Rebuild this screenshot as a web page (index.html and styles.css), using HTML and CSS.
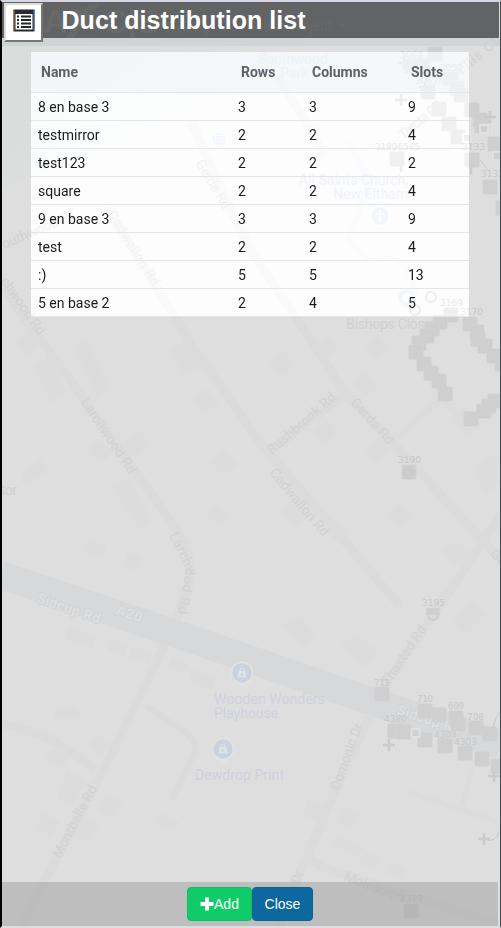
FILE: index.html
```
<!DOCTYPE html>
<html lang="en">
<head>
<meta charset="utf-8">
<title>Duct distribution list</title>
<link rel="stylesheet" href="styles.css">
</head>
<body>
<svg class="map" viewBox="0 0 501 928" width="501" height="928" aria-hidden="true">
  <defs>
    <linearGradient id="park" gradientUnits="userSpaceOnUse" x1="0" y1="40" x2="110" y2="200"><stop offset="0" stop-color="#d8dddc"/><stop offset="1" stop-color="#dedede"/></linearGradient>
    <rect id="n" x="-7.3" y="-7.3" width="14.6" height="14.6" rx="1.5"/>
    <path id="plus" d="M-6 0H6M0-6V6"/>
    <g id="shop"><path d="M-8 8L0 15 8 8z" class="halo"/><circle r="11.500" class="halo"/><circle r="9.700"/><path d="M-4.500 4.500h9l-1-6.500h-7z" class="bag"/><path d="M-2-2v-1a2 2 0 0 1 4 0v1" class="handle"/><circle r="1.200" cy="1.500"/></g>
  </defs>
  <path d="M0 38H310L230 92 2 190Z" fill="url(#park)"/>
  <g class="blocks">
    <path d="M15 342l14-12 12 14-14 12zM34 365l16-9 17 37-15 10zM74 348l13-8 23 48-13 9zM98 440l16 11-12 12-15-12zM138 430l13 15-15 13-14-13zM170 350l16-9 15 25-17 10zM192 398l15-9 12 16-17 9zM222 450l15 14-13 11-14-13zM21 475l20-16 7 12-22 14zM112 485l15-7 25 42-13 10zM216 506l13 9-10 10-14-9zM87 540l20 6-4 12-20-7zM128 552l14 6-4 13-14-4zM68 626l28 10-4 12-27-10zM110 638l18 6-4 13-16-6zM132 646l20 6-3 12-19-6zM172 658l16 6-6 10-14-6zM192 669l24 10-5 12-22-9z"/>
    <path d="M53 710l20-5 11 8-8 6-22-1zM50 748l18 6-4 14-20-8zM97 735l13 9-10 12-13-10zM67 770l20 10-14 27-16-8zM106 793l17 10-10 16-15-8zM84 817l16 7-10 18-16-8zM43 812l17 10-9 15-15-9zM160 812l20 10-7 9-17-9zM308 800l20 5-4 17-20-5zM344 805l18 9-11 16-15-9zM336 835l28 12-5 10-28-12zM363 852l18 6-6 12-16-6zM392 862l15 7-6 11-15-7z"/>
    <path d="M268 362l15-12 12 14-13 12zM310 348l19-13 9 14-17 12zM365 345l13-10 11 14-14 11zM352 383l14-12 13 15-14 10zM313 430l15-11 10 14-15 12zM365 450l16-13 9 13-14 12zM292 500l17 15-12 13-18-16zM336 520l14 12-10 12-15-12zM450 420l16-13 16 16-14 13zM474 469l17-15 9 10v19l-15 11zM442 550l16-8 12 13-15 10zM386 515l12-12 14 13-12 13zM340 645l18-10 20 18-17 14zM283 625l16-9 17 18-14 13zM452 623l20-21 13 13-20 20z"/>
  </g>
  <g class="roads">
    <path d="M0 278Q22 320 45 345L177 530Q194 552 188 590L162 651 110 757 20 928" />
    <path d="M105 205L192 345 258 440 400 606"/>
    <path d="M190 120L250 250 306 332 345 394 395 445 482 540 501 560"/>
    <path d="M270 451L345 394M501 515L460 575 382 690 334 793 308 855 275 928M308 859L330 870 501 925M-5 723Q50 730 95 770M260 52l40 60 25 45"/>
    <path class="lane" d="M145 705L189 735Q200 747 192 758L172 799"/>
  </g>
  <path class="stream" d="M345 140l25 40-22 60 22 22q40-15 45 35M397 437l44-38 21 20M408 792l92 30M462 805l10-35"/>
  <path class="a20" d="M0 575L170 632 380 704 501 745"/>
  <g class="road-labels">
    <text transform="translate(80 402) rotate(56)" textLength="88">Larchwood Rd</text>
    <text transform="translate(0 281) rotate(55)" textLength="67">chwood Rd</text>
    <text transform="translate(169 535) rotate(64)" textLength="47">Larchw</text>
    <text transform="translate(186 567) rotate(100)" textLength="47">ood Rd</text>
    <text transform="translate(107 214) rotate(58)" textLength="86">Cadwallon Rd</text>
    <text transform="translate(195 163) rotate(59)" textLength="55">Gerda Rd</text>
    <text transform="translate(350 403) rotate(48)" textLength="57">Gerda Rd</text>
    <text transform="translate(272 455) rotate(-41)" textLength="86">Rushbrook Rd</text>
    <text transform="translate(269 473) rotate(50)" textLength="84">Cadwallon Rd</text>
    <text transform="translate(388 687) rotate(-56)" textLength="70">Thaxted Rd</text>
    <text transform="translate(339 791) rotate(-70)" textLength="70">Domonic Dr</text>
    <text transform="translate(280 938) rotate(-70)" textLength="70">Domonic Dr</text>
    <text transform="translate(60 859) rotate(-62)" textLength="80">Montbelle Rd</text>
    <text transform="translate(343 880) rotate(21)" textLength="65">Molescroft</text>
    <text transform="translate(4 249) rotate(-23)" textLength="80">outhwood RT</text>
    <text transform="translate(403 140) rotate(-39)" textLength="52">Tarcta Rd</text>
    <text transform="translate(461 75) rotate(-39)" textLength="48">Ellis Cl</text>
    <text transform="translate(489 555) rotate(40)">Ge</text>
  </g>
  <g class="a20-labels">
    <text transform="translate(36 602) rotate(19)" textLength="66">Sidcup Rd</text>
    <text transform="translate(115 614) rotate(18)" textLength="27">A20</text>
    <text transform="translate(396 714) rotate(18)" textLength="66">Sidcup Rd</text>
  </g>
  <g class="places">
    <g class="green"><text x="258" y="64" textLength="70">Southwood</text><text x="280" y="78" textLength="28">Park</text></g>
    <text x="299" y="185" textLength="109">All Saints Church,</text><text x="333" y="199" textLength="75">New Eltham</text>
    <g class="grey"><text x="346" y="329" textLength="86">Bishops Close</text><text x="1" y="495" textLength="16">tor</text></g>
    <text x="214" y="704" textLength="111">Wooden Wonders</text><text x="214" y="718" textLength="64">Playhouse</text><text x="195" y="780" textLength="89">Dewdrop Print</text>
  </g>
  <g class="shops"><use href="#shop" x="242" y="673"/><use href="#shop" x="223" y="749"/></g>
  <g class="church"><circle cx="380" cy="216" r="10"/><path d="M380 210v12M376 214h8"/><circle cx="407" cy="298" r="7" class="ring"/></g>
  <g class="bus"><circle cx="219" cy="139" r="6.5"/><path d="M215.500 135.500h7v6h-7zM216 139h6"/></g>
  <g class="nodes">
    <use href="#n" x="435" y="54"/><use href="#n" x="412" y="66"/><use href="#n" x="422" y="66"/><use href="#n" x="428" y="92"/><use href="#n" x="451" y="79"/><use href="#n" x="457" y="88"/><use href="#n" x="461" y="95"/><use href="#n" x="439" y="109"/><use href="#n" x="449" y="124"/><use href="#n" x="458" y="137"/><use href="#n" x="472" y="110"/><use href="#n" x="480" y="120"/><use href="#n" x="482" y="126"/><use href="#n" x="495" y="144"/><use href="#n" x="397" y="159"/><use href="#n" x="472" y="160"/><use href="#n" x="490" y="187"/><use href="#n" x="503" y="208"/>
    <use href="#n" x="451" y="315"/><use href="#n" x="440" y="322"/><use href="#n" x="432" y="329"/><use href="#n" x="427" y="336"/><use href="#n" x="419" y="343"/><use href="#n" x="416" y="352"/><use href="#n" x="424" y="364"/><use href="#n" x="431" y="373"/><use href="#n" x="439" y="381"/><use href="#n" x="445" y="394"/><use href="#n" x="470" y="324"/><use href="#n" x="477" y="332"/><use href="#n" x="478" y="339"/><use href="#n" x="485" y="346"/><use href="#n" x="494" y="356"/><use href="#n" x="502" y="364"/><use href="#n" x="471" y="419"/><use href="#n" x="484" y="411"/><use href="#n" x="489" y="406"/><use href="#n" x="495" y="401"/>
    <use href="#n" x="409" y="472"/><use href="#n" x="382" y="694"/><use href="#n" x="425" y="711"/><use href="#n" x="439" y="715"/><use href="#n" x="456" y="718"/><use href="#n" x="458" y="724"/><use href="#n" x="476" y="728"/><use href="#n" x="490" y="734"/><use href="#n" x="395" y="731"/><use href="#n" x="404" y="732"/><use href="#n" x="425" y="740"/><use href="#n" x="445" y="746"/><use href="#n" x="465" y="753"/><use href="#n" x="482" y="759"/><use href="#n" x="498" y="766"/><use href="#n" x="411" y="911"/>
    <rect x="426" y="608" width="14" height="7"/>
  </g>
  <g class="marks">
    <use href="#plus" x="389" y="745"/><use href="#plus" x="484" y="839"/><use href="#plus" x="494" y="776"/><use href="#plus" x="401" y="100"/><use href="#plus" x="404" y="63"/><use href="#plus" x="490" y="117"/><use href="#plus" x="425" y="87"/><path d="M401 166v6M471 167v7"/>
  </g>
  <g class="outlines">
    <circle cx="431" cy="297" r="5"/><circle cx="415" cy="310" r="5"/><path d="M428 615a5 5 0 0 0 10 0"/>
    <g class="boxes"><rect x="480" y="125" width="8" height="8"/><rect x="493" y="152" width="8" height="8"/><rect x="463" y="134" width="8" height="8"/><rect x="411.500" y="729" width="8" height="8"/></g>
    <path class="thin" d="M480 160l8 10M488 840q8 2 11-8M493 728q3-12 7-16"/><circle class="thin" cx="408.500" cy="473" r="5.500"/><circle class="thin" cx="408.500" cy="473" r="3"/>
  </g>
  <g class="ids">
    <text x="400" y="58">3068</text><text x="440" y="71">3052</text><text x="415" y="84">3067A</text><text x="375" y="150" textLength="45">31896585</text><text x="462" y="150">3133</text><text x="481" y="177">3132</text><text x="440" y="306">3169</text><text x="460" y="315">3170</text><text x="398" y="463">3190</text><text x="422" y="606">3195</text><text x="374" y="686" textLength="16">711</text><text x="417" y="702" textLength="16">710</text><text x="448" y="709" textLength="16">699</text><text x="467" y="720" textLength="17">708</text><text x="384" y="722">4380</text><text x="434" y="738">4304</text><text x="454" y="745">4303</text><text x="400" y="902">4317</text>
  </g>
</svg>
<main class="panel">
  <header class="titlebar">
    <span class="title-icon"><svg width="22" height="23" viewBox="0 0 22 23"><rect x="1.500" y="1.500" width="19" height="20" fill="#fff" stroke="#292b31" stroke-width="2"/><path d="M1 1h20v4H1z" fill="#292b31"/><path d="M1 1v21" stroke="#a86b43"/><path d="M21 1v21" stroke="#4d79aa"/><path d="M4 7.500h2M4 11h2M4 14.500h2M4 18h2M8 7.500h10M8 11h10M8 14.500h10M8 18h10" stroke="#24262c" stroke-width="1.800"/></svg></span>
    <svg class="ghost" width="440" height="36" aria-hidden="true"><text class="brand" x="0" y="31">AP</text><path d="M21 38L46 2h10L29 38zM31 7h9l13 20h-9z"/><text class="brand" x="60" y="31">C|S</text><text x="121" y="31">Testing</text><text x="205" y="29" textLength="84">Select Project</text><path d="M295 22h8l-4 4z"/></svg>
    <h1>Duct distribution list</h1>
  </header>
  <section class="content">
    <table>
      <colgroup><col class="c-name"><col class="c-rows"><col class="c-cols"><col class="c-slots"></colgroup>
      <thead><tr><th>Name</th><th>Rows</th><th>Columns</th><th>Slots</th></tr></thead>
      <tbody>
        <tr><td>8 en base 3</td><td>3</td><td>3</td><td>9</td></tr>
        <tr><td>testmirror</td><td>2</td><td>2</td><td>4</td></tr>
        <tr><td>test123</td><td>2</td><td>2</td><td>2</td></tr>
        <tr><td>square</td><td>2</td><td>2</td><td>4</td></tr>
        <tr><td>9 en base 3</td><td>3</td><td>3</td><td>9</td></tr>
        <tr><td>test</td><td>2</td><td>2</td><td>4</td></tr>
        <tr><td>:)</td><td>5</td><td>5</td><td>13</td></tr>
        <tr><td>5 en base 2</td><td>2</td><td>4</td><td>5</td></tr>
      </tbody>
    </table>
  </section>
  <footer class="actions">
    <button class="btn add"><svg width="14" height="14" viewBox="0 0 14 14"><path d="M5 0.500h4v4.500h4.500v4H9v4.500H5V9H.500V5H5z" fill="#fff"/></svg>Add</button>
    <button class="btn close">Close</button>
  </footer>
</main>
</body>
</html>
```
FILE: styles.css
```
* { box-sizing: border-box; }
body { margin: 0; height: 928px; overflow: hidden; background: #dedede; font-family: "Liberation Sans", Arial, sans-serif; }
.map { position: absolute; left: 0; top: 0; font-family: Roboto, sans-serif; }
.blocks { fill: #dcdcdc; }
.roads { fill: none; stroke: #dbdbdb; stroke-width: 9; stroke-linejoin: round; }
.roads .lane { stroke-width: 6; }
.stream { fill: none; stroke: #dadcde; stroke-width: 6; }
.a20 { fill: none; stroke: #d6d8da; stroke-width: 28; }
.road-labels { font-size: 14px; font-weight: 500; fill: #d2d4d4; }
.a20-labels { font-size: 14px; font-weight: 500; fill: #dfe0e0; stroke: #d1d4d6; stroke-width: 2px; paint-order: stroke; }
.places { font-size: 14px; fill: #cfd1dc; }
.places .green { fill: #cadad5; }
.places .grey { fill: #d0d1d2; }
.shops { fill: #c9d2dd; }
.halo { fill: #e2e2e2; }
.bag { fill: #dfe1e3; }
.handle { fill: none; stroke: #dfe1e3; stroke-width: 1.2; }
.church { fill: #d3d8df; stroke: #e0e1e3; stroke-width: 2; }
.church .ring { fill: #dde0e4; stroke: #d3d8df; stroke-width: 4; }
.bus { fill: #d3d6dc; stroke: #e0e0e2; }
.nodes { fill: #cfcfcf; stroke: #d5d5d5; stroke-width: .5; }
.marks { fill: none; stroke: #cbcbcb; stroke-width: 2.5; }
.outlines { fill: none; stroke: #cccccc; stroke-width: 2; }
.outlines .boxes { fill: #cfcfcf; stroke: #e1e1e1; }
.outlines .thin { stroke-width: 1; stroke: #c6c6c6; }
.ids { font: 9px "DejaVu Sans", sans-serif; fill: #c8c8c8; }

.panel { position: relative; display: flex; flex-direction: column; width: 501px; height: 928px; border-top: 2px solid #d5d5e4; border-bottom: 2px solid #dedede; border-left: 2px solid #000; border-right: 1px solid #454748; }
.titlebar { position: relative; z-index: 1; display: flex; align-items: flex-start; flex: none; height: 36px; margin-right: 1px; background: #626365; }
.title-icon { position: relative; z-index: 1; display: flex; align-items: center; justify-content: center; flex: none; width: 39px; height: 39px; margin: 1px 0 0 2px; background: #fff; border: 2px solid; border-color: #dcdcdc #777 #777 #dcdcdc; }
.title-icon svg { margin-top: -5px; margin-left: 1px; }
.ghost { position: absolute; left: 41px; top: 0; fill: #686969; font: 14px Roboto, sans-serif; }
.ghost .brand { font: bold 34px "Liberation Sans", sans-serif; }
h1 { position: relative; margin: 3px 0 0 18.5px; font-size: 25px; line-height: 30px; letter-spacing: .05px; font-weight: bold; color: #fff; white-space: nowrap; }
.content { flex: 1; padding: 6px 29px 0; border-top: 8px solid rgba(200, 202, 207, .5); }
table { width: 438px; table-layout: fixed; border-collapse: separate; border-spacing: 0; background: rgba(255, 255, 255, .25); backdrop-filter: brightness(1.135); font-family: Roboto, sans-serif; font-size: 14px; color: #1b1b1b; }
.c-name { width: 200px; }
.c-rows { width: 71px; }
.c-cols { width: 99px; }
.c-slots { width: 68px; }
th, td { text-align: left; border-bottom: 1px solid #e2e6e9; }
th { height: 41px; padding: 0 10px; background: rgba(232, 238, 242, .4); font-weight: 700; color: #5b6268; }
td { height: 28px; padding: 0 7px; line-height: 18px; }
.actions { flex: 0 0 44px; display: flex; justify-content: center; align-items: center; margin-right: 2px; background: rgba(157, 157, 157, .5); }
.btn { display: flex; align-items: center; justify-content: center; height: 34px; padding: 0; border: 1px solid #11bd60; border-radius: 4px; font: 14px "Liberation Sans", Arial, sans-serif; color: #fff; }
.add { width: 65px; background: #10cb69; }
.close { width: 61px; background: #0c689f; border-color: #0b6296; }
```
